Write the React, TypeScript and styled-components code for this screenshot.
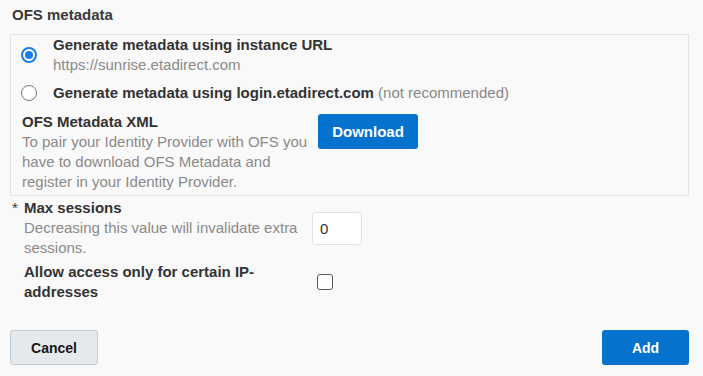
import styled, { createGlobalStyle } from "styled-components";

const GlobalStyle = createGlobalStyle`
  html, body {
    margin: 0;
    padding: 0;
    background: #f9f9f9;
  }
  body {
    font-family: "Liberation Sans", Arial, sans-serif;
    font-size: 15px;
    color: #333;
  }
`;

const App = () => {
  return (
    <>
      <GlobalStyle />
      <Page>
        <SectionTitle>OFS metadata</SectionTitle>
        <Box>
          <RadioRow>
            <Radio type="radio" name="meta" defaultChecked />
            <RadioText>
              <Strong>Generate metadata using instance URL</Strong>
              <Hint>https://sunrise.etadirect.com</Hint>
            </RadioText>
          </RadioRow>
          <RadioRow $gap={8}>
            <Radio type="radio" name="meta" />
            <RadioText>
              <Strong>
                Generate metadata using login.etadirect.com{" "}
                <Muted>(not recommended)</Muted>
              </Strong>
            </RadioText>
          </RadioRow>
          <XmlRow>
            <div>
              <Strong>OFS Metadata XML</Strong>
              <Hint>
                To pair your Identity Provider with OFS you have to download OFS
                Metadata and register in your Identity Provider.
              </Hint>
            </div>
            <PrimaryButton $width={100} $size={15}>
              Download
            </PrimaryButton>
          </XmlRow>
        </Box>

        <FieldRow>
          <Required>*</Required>
          <FieldLabel>
            <Strong>Max sessions</Strong>
            <Hint>Decreasing this value will invalidate extra sessions.</Hint>
          </FieldLabel>
          <NumberInput defaultValue="0" />
        </FieldRow>

        <FieldRow>
          <Required />
          <FieldLabel>
            <Strong>Allow access only for certain IP-addresses</Strong>
          </FieldLabel>
          <Checkbox type="checkbox" />
        </FieldRow>

        <Footer>
          <SecondaryButton>Cancel</SecondaryButton>
          <PrimaryButton $width={87} $size={14}>
            Add
          </PrimaryButton>
        </Footer>
      </Page>
    </>
  );
};

export default App;

const Page = styled.div`
  padding: 0 14px 0 10px;
  width: 703px;
  height: 376px;
  box-sizing: border-box;
`;

const SectionTitle = styled.div`
  font-weight: 700;
  line-height: 20px;
  padding: 5px 2px 9px;
  color: #3a3a3a;
`;

const Box = styled.div`
  border: 1px solid #dfe4e6;
  padding: 0 10px 3px;
  display: flex;
  flex-direction: column;
`;

const RadioRow = styled.label<{ $gap?: number }>`
  display: flex;
  align-items: center;
  gap: 16px;
  margin-top: ${(p) => p.$gap ?? 0}px;
`;

const Radio = styled.input`
  appearance: none;
  margin: 0;
  width: 16px;
  height: 16px;
  border-radius: 50%;
  border: 1.5px solid #777;
  background: #fff;
  box-sizing: border-box;
  flex: none;
  display: grid;
  place-items: center;
  &:checked {
    border: 2px solid #1a7ef0;
  }
  &:checked::after {
    content: "";
    width: 8px;
    height: 8px;
    border-radius: 50%;
    background: #1a7ef0;
  }
`;

const RadioText = styled.div`
  display: flex;
  flex-direction: column;
`;

const Strong = styled.div`
  font-weight: 700;
  line-height: 20px;
  color: #333;
`;

const Muted = styled.span`
  font-weight: 400;
  color: #888;
`;

const Hint = styled.div`
  line-height: 20px;
  color: #8a8a8a;
`;

const XmlRow = styled.div`
  display: grid;
  grid-template-columns: 297px auto;
  align-items: start;
  margin-top: 9px;
  > div {
    padding-left: 1px;
  }
`;

const PrimaryButton = styled.button<{ $width: number; $size: number }>`
  width: ${(p) => p.$width}px;
  height: 35px;
  border: none;
  border-radius: 3px;
  background: #0572ce;
  color: #fff;
  font-family: "Liberation Sans", Arial, sans-serif;
  font-size: ${(p) => p.$size}px;
  font-weight: 700;
  margin-top: 2px;
`;

const FieldRow = styled.div`
  display: flex;
  align-items: center;
  padding-left: 2px;
  margin-top: 2px;
  & + & {
    margin-top: 4px;
  }
`;

const Required = styled.span`
  width: 12px;
  align-self: flex-start;
  line-height: 20px;
  color: #333;
`;

const FieldLabel = styled.div`
  width: 288px;
`;

const NumberInput = styled.input`
  width: 50px;
  height: 33px;
  box-sizing: border-box;
  border: 1px solid #dde2e5;
  border-radius: 3px;
  background: #fff;
  padding: 0 7px;
  font-family: "Liberation Sans", Arial, sans-serif;
  font-size: 15px;
  color: #333;
`;

const Checkbox = styled.input`
  appearance: none;
  margin: 0 0 0 5px;
  width: 16px;
  height: 16px;
  box-sizing: border-box;
  border: 1px solid #555;
  border-radius: 3px;
  background: #fff;
`;

const Footer = styled.div`
  display: flex;
  justify-content: space-between;
  margin-top: 28px;
  > button {
    margin-top: 0;
  }
`;

const SecondaryButton = styled.button`
  width: 88px;
  height: 35px;
  border: 1px solid #c3ccd3;
  border-radius: 3px;
  background: #e6e9ec;
  color: #161616;
  font-family: "Liberation Sans", Arial, sans-serif;
  font-size: 14px;
  font-weight: 700;
`;
